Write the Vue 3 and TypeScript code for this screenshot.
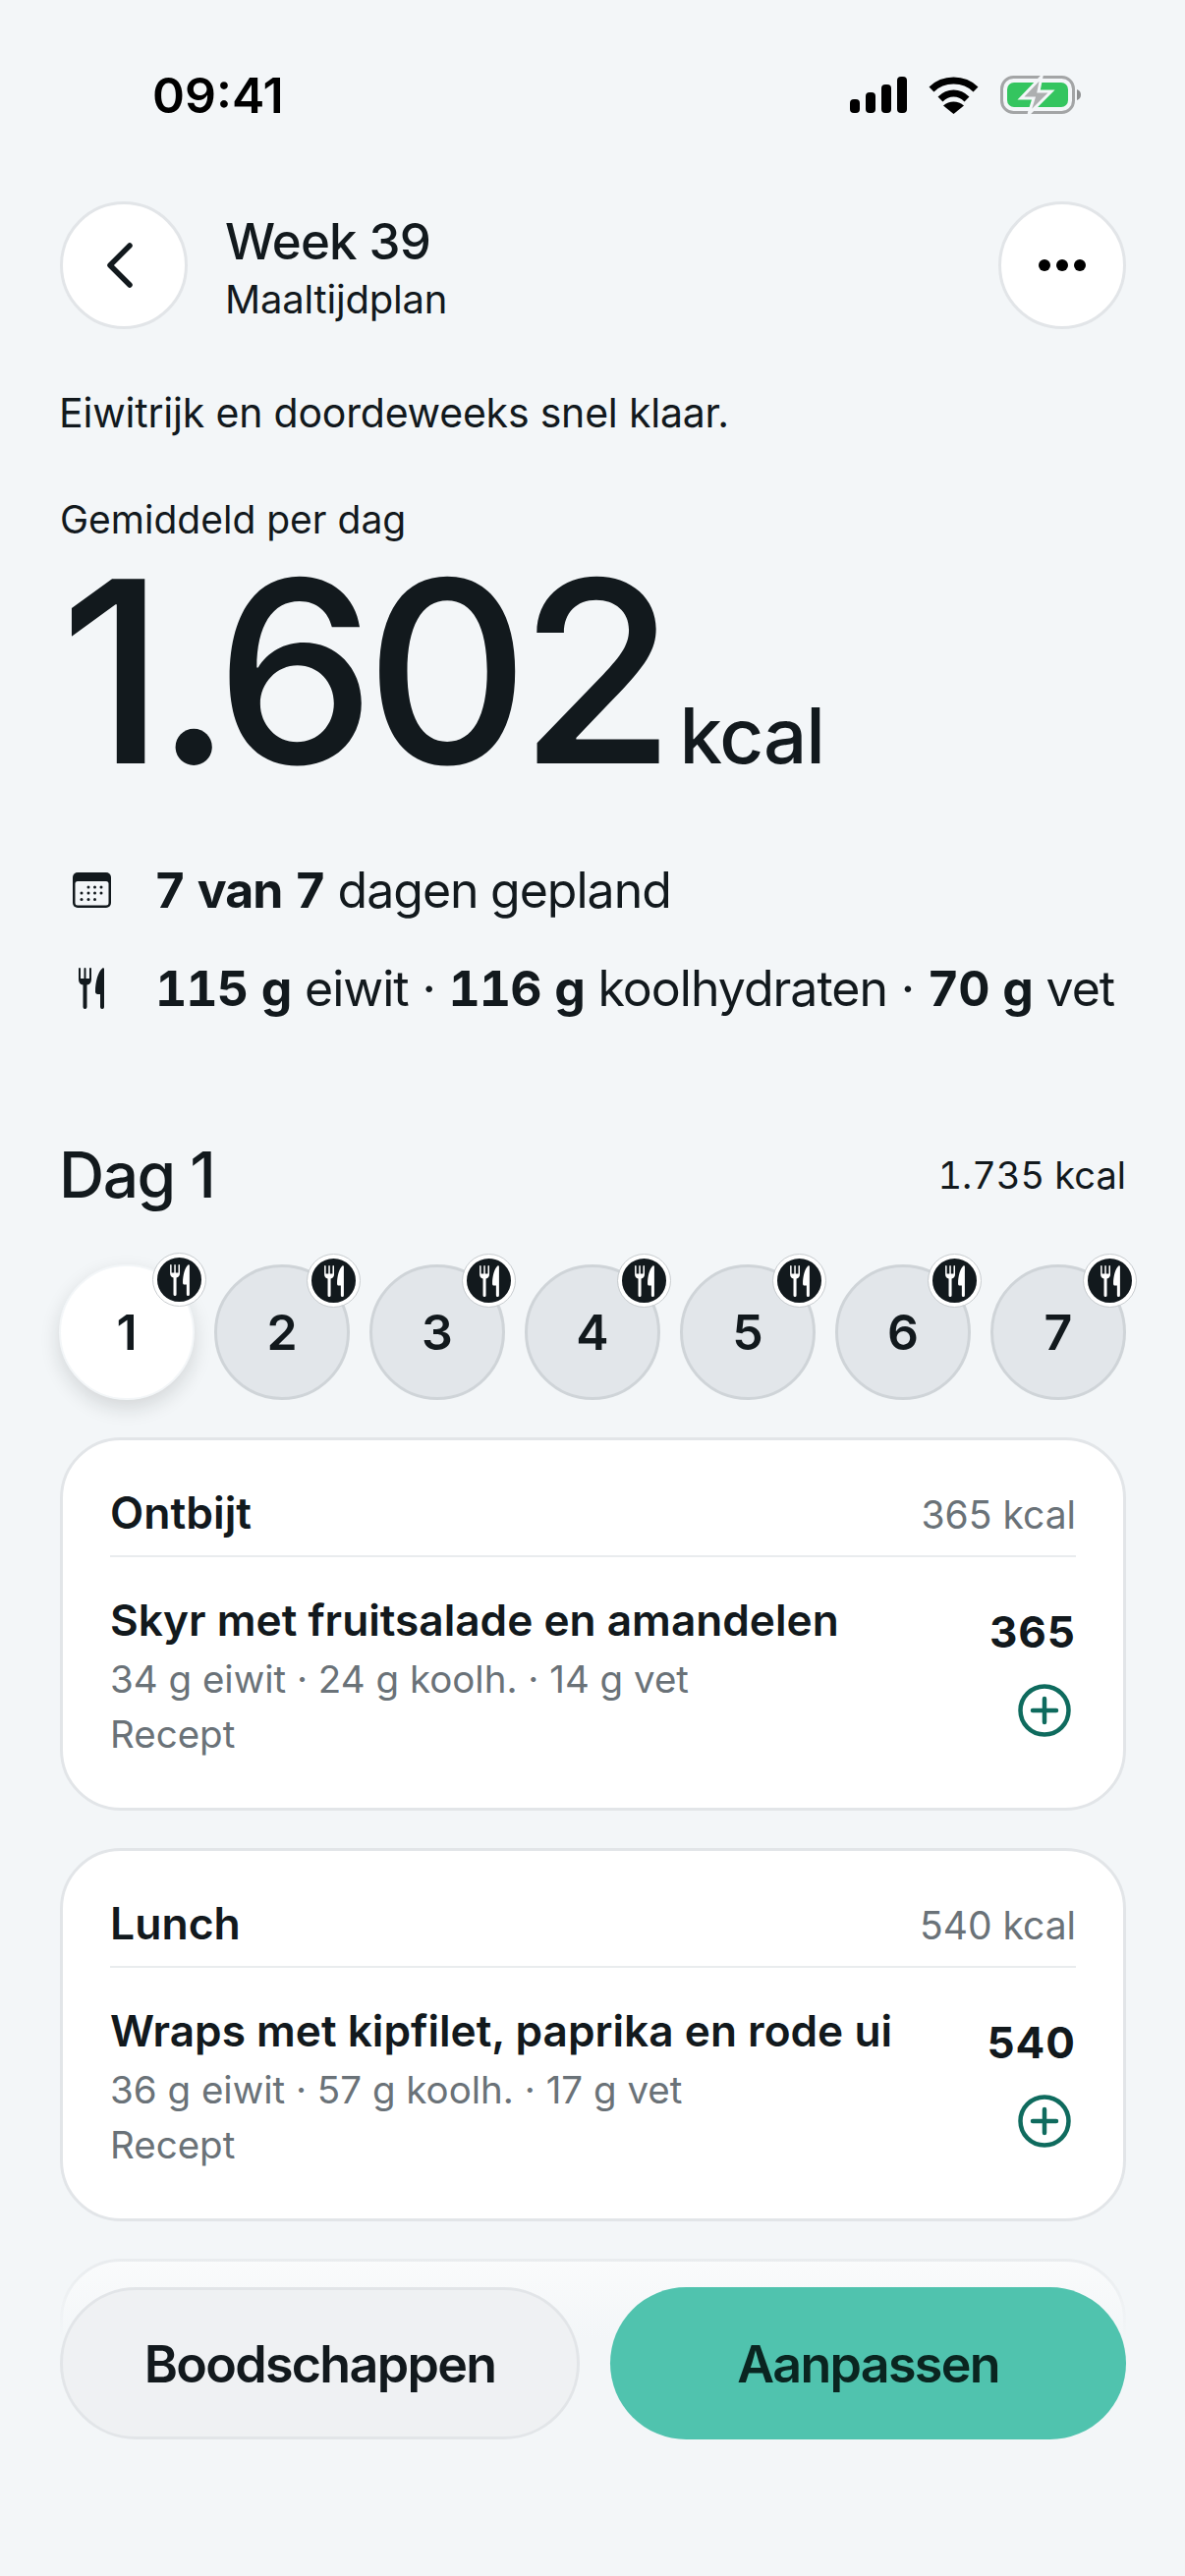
<template>
  <div class="screen">
    <div class="status">
      <span class="time">09:41</span>
      <div class="status-icons">
        <svg width="58" height="38" viewBox="0 0 58 38">
          <rect x="0" y="23" width="10" height="14" rx="4" />
          <rect x="16" y="16" width="10" height="21" rx="4" />
          <rect x="32" y="8" width="10" height="29" rx="4" />
          <rect x="48" y="0" width="10" height="37" rx="4" />
        </svg>
        <svg width="51" height="38" viewBox="0 0 51 38">
          <path d="M3 13C15 1 36 1 48 13" fill="none" stroke="#000" stroke-width="7" />
          <path d="M12 23C20 15 31 15 39 23" fill="none" stroke="#000" stroke-width="7" />
          <path d="M15 29.500C21 24 30 24 36 29.500L25.500 38z" />
        </svg>
        <svg width="84" height="40" viewBox="0 0 84 40">
          <rect x="1.500" y="1.500" width="73" height="36" rx="12" fill="none" stroke="#a3a5a6" stroke-width="3" />
          <rect x="7" y="7" width="62" height="25" rx="7" fill="#34c55f" />
          <path d="M78 14c3 1 4 3 4 5.500s-1 4.500-4 5.500z" fill="#8e9091" />
          <path d="M42 1 21 23h13l-5 16 23-23H39z" fill="#adafb0" stroke="#f3f6f8" stroke-width="3" />
        </svg>
      </div>
    </div>

    <div class="header">
      <button class="round-btn">
        <svg class="chevron" width="30" height="48" viewBox="0 0 30 48">
          <path d="M25 4 5 24l20 20" fill="none" stroke="#12191d" stroke-width="5.500" stroke-linecap="round" stroke-linejoin="round" />
        </svg>
      </button>
      <div class="header-text">
        <div class="week">Week 39</div>
        <div class="sub">Maaltijdplan</div>
      </div>
      <button class="round-btn">
        <svg width="50" height="14" viewBox="0 0 50 14">
          <circle cx="7" cy="7" r="6" />
          <circle cx="25" cy="7" r="6" />
          <circle cx="43" cy="7" r="6" />
        </svg>
      </button>
    </div>

    <p class="intro">Eiwitrijk en doordeweeks snel klaar.</p>
    <div class="avg-label">Gemiddeld per dag</div>
    <div class="total">
      <span class="total-num">1.602</span>
      <span class="total-unit">kcal</span>
    </div>

    <div class="stat-row">
      <svg class="stat-icon" width="39" height="36" viewBox="0 0 39 36">
        <rect width="39" height="36" rx="5" fill="#12191d" />
        <rect x="2.500" y="9" width="34" height="24.500" rx="2.500" fill="#f3f6f8" />
        <g fill="#12191d">
          <circle v-for="d in calendarDots" :key="d[0] + '-' + d[1]" :cx="d[0]" :cy="d[1]" r="1.500" />
        </g>
      </svg>
      <span><b>7 van 7</b> dagen gepland</span>
    </div>
    <div class="stat-row stat-row-2">
      <svg class="stat-icon" width="26" height="42" viewBox="0 0 26 42">
        <path :d="forkKnife" fill="#12191d" />
      </svg>
      <span><b>115 g</b> eiwit · <b>116 g</b> koolhydraten · <b>70 g</b> vet</span>
    </div>

    <div class="day-head">
      <span class="day-title">Dag 1</span>
      <span class="day-kcal">1.735 kcal</span>
    </div>

    <div class="days">
      <div v-for="n in 7" :key="n" class="day" :class="{ active: n === 1 }">
        {{ n }}
        <span class="badge">
          <svg width="20" height="32" viewBox="0 0 26 42">
            <path :d="forkKnife" fill="#fff" />
          </svg>
        </span>
      </div>
    </div>

    <div v-for="meal in meals" :key="meal.type" class="card">
      <div class="card-head">
        <span class="meal-type">{{ meal.type }}</span>
        <span class="meal-kcal">{{ meal.kcal }} kcal</span>
      </div>
      <div class="card-body">
        <div class="meal-info">
          <div class="meal-name">{{ meal.name }}</div>
          <div class="meal-meta">{{ meal.macros }}</div>
          <div class="meal-meta meal-source">Recept</div>
        </div>
        <div class="meal-side">
          <span class="meal-num">{{ meal.kcal }}</span>
          <svg class="plus" width="54" height="54" viewBox="0 0 54 54">
            <circle cx="27" cy="27" r="24.500" fill="none" stroke="#0f6b5e" stroke-width="4.500" />
            <path d="M27 15v24M15 27h24" fill="none" stroke="#0f6b5e" stroke-width="4.500" stroke-linecap="round" />
          </svg>
        </div>
      </div>
    </div>
    <div class="card card-peek"></div>

    <div class="bottom">
      <button class="action action-light">Boodschappen</button>
      <button class="action action-main">Aanpassen</button>
    </div>
  </div>
</template>

<script setup lang="ts">
interface Meal {
  type: string
  kcal: number
  name: string
  macros: string
}

const meals: Meal[] = [
  { type: 'Ontbijt', kcal: 365, name: 'Skyr met fruitsalade en amandelen', macros: '34 g eiwit · 24 g koolh. · 14 g vet' },
  { type: 'Lunch', kcal: 540, name: 'Wraps met kipfilet, paprika en rode ui', macros: '36 g eiwit · 57 g koolh. · 17 g vet' },
]

const calendarDots: number[][] = [
  [16, 15], [22.500, 15], [29, 15],
  [9, 21], [16, 21], [22.500, 21], [29, 21],
  [9, 27.500], [16, 27.500], [22.500, 27.500],
]

const forkKnife =
  'M0 1a1 1 0 0 1 2 0v10h3.500V1a1 1 0 0 1 2 0v10H11V1a1 1 0 0 1 2 0v11c0 3-1.600 5-4.500 5.600V40a2 2 0 0 1-4 0V17.600C1.600 17 0 15 0 12z' +
  'M26 1.500V40a2 2 0 0 1-4 0V27h-2.500c-1.500 0-2.500-1-2.500-2.500C17 14 20 4 24 .8 25 0 26 .3 26 1.500z'
</script>

<style>
html,
body {
  margin: 0;
  background: #f3f6f8;
}
</style>

<style scoped>
.screen {
  position: relative;
  box-sizing: border-box;
  width: 1206px;
  height: 2622px;
  overflow: hidden;
  padding: 0 60px 0 61px;
  background: #f3f6f8;
  color: #12191d;
  font-family: Inter, "Liberation Sans", sans-serif;
}
.status {
  display: flex;
  justify-content: space-between;
  align-items: center;
  height: 38px;
  padding: 78px 44px 89px 94px;
}
.time {
  font-size: 50px;
  font-weight: 600;
  color: #000;
  line-height: 38px;
}
.status-icons {
  display: flex;
  align-items: center;
  gap: 22px;
}
.header {
  display: flex;
  align-items: center;
}
.round-btn {
  box-sizing: border-box;
  display: flex;
  align-items: center;
  justify-content: center;
  width: 130px;
  height: 130px;
  padding: 0;
  border: 3px solid #e2e5e8;
  border-radius: 50%;
  background: #fff;
}
.chevron {
  margin-right: 8px;
}
.header-text {
  flex: 1;
  margin-left: 38px;
  padding-top: 5px;
}
.week {
  font-size: 51px;
  font-weight: 500;
  line-height: 62px;
  letter-spacing: -0.800px;
}
.sub {
  margin-top: 3px;
  font-size: 40px;
  font-weight: 400;
  line-height: 50px;
  letter-spacing: -0.200px;
}
.intro {
  margin: 60px 0 0 -1px;
  font-size: 41px;
  line-height: 50px;
  letter-spacing: -0.200px;
}
.avg-label {
  margin-top: 59px;
  font-size: 39px;
  line-height: 50px;
}
.total {
  display: flex;
  align-items: baseline;
  gap: 14px;
  height: 240px;
  margin-top: 9px;
  line-height: 240px;
}
.total-num {
  font-size: 258px;
  font-weight: 500;
  letter-spacing: -10px;
}
.total-unit {
  font-size: 78px;
  font-weight: 500;
  letter-spacing: -1px;
}
.stat-row {
  display: flex;
  align-items: center;
  margin-top: 71px;
  font-size: 50px;
  line-height: 64px;
  letter-spacing: -1px;
  font-variant-numeric: tabular-nums;
}
.stat-row-2 {
  margin-top: 36px;
  word-spacing: 1.300px;
}
.stat-row b {
  font-weight: 700;
  letter-spacing: -1px;
}
.stat-icon {
  flex: none;
  margin: 0 44px 0 13px;
}
.stat-row-2 .stat-icon {
  margin: 0 52px 0 19px;
}
.day-head {
  display: flex;
  justify-content: space-between;
  align-items: center;
  margin: 118px 0 0 -1px;
  line-height: 80px;
}
.day-title {
  font-size: 64px;
  font-weight: 500;
  letter-spacing: -1.500px;
}
.day-kcal {
  font-size: 38px;
  font-variant-numeric: tabular-nums;
}
.days {
  display: flex;
  justify-content: space-between;
  margin: 51px 0 0 -1px;
}
.day {
  position: relative;
  box-sizing: border-box;
  display: flex;
  align-items: center;
  justify-content: center;
  width: 138px;
  height: 138px;
  border: 3px solid #cfd4d8;
  border-radius: 50%;
  background: #e2e6ea;
  font-size: 50px;
  font-weight: 600;
}
.day.active {
  border: 2px solid #f3f6f8;
  background: #fff;
  box-shadow: 0 8px 20px rgba(20, 25, 30, 0.14);
}
.badge {
  position: absolute;
  top: -13px;
  right: -13px;
  display: flex;
  align-items: center;
  justify-content: center;
  width: 45px;
  height: 45px;
  border: 4px solid #fff;
  border-radius: 50%;
  outline: 1px solid #c9cdd0;
  background: #12191d;
}
.card {
  box-sizing: border-box;
  height: 380px;
  margin-top: 38px;
  padding: 46px 48px 0;
  border: 3px solid #e2e5e8;
  border-radius: 62px;
  background: #fff;
}
.card-head {
  display: flex;
  justify-content: space-between;
  align-items: baseline;
  padding-bottom: 13px;
  border-bottom: 2px solid #e9ecee;
  line-height: 56px;
}
.meal-type {
  font-size: 44.500px;
  font-weight: 580;
}
.meal-kcal {
  font-size: 39px;
  color: #6a7278;
}
.card-body {
  display: flex;
  justify-content: space-between;
  margin-top: 36px;
}
.meal-name {
  font-size: 44.200px;
  font-weight: 580;
  line-height: 56px;
}
.meal-meta {
  margin-top: 5px;
  font-size: 38.500px;
  line-height: 54px;
  color: #6a7278;
}
.meal-source {
  margin-top: 2px;
}
.meal-side {
  display: flex;
  flex-direction: column;
  align-items: flex-end;
}
.meal-num {
  margin-top: 12px;
  font-size: 44px;
  font-weight: 700;
  line-height: 56px;
  letter-spacing: 1px;
}
.plus {
  margin: 25px 5px 0 0;
}
.bottom {
  position: absolute;
  left: 0;
  right: 0;
  top: 2290px;
  bottom: 0;
  display: flex;
  align-items: flex-start;
  gap: 31px;
  box-sizing: border-box;
  padding: 38px 60px 0 61px;
  background: linear-gradient(rgba(243, 246, 248, 0.35), #f3f6f8 90px);
}
.action {
  box-sizing: border-box;
  height: 155px;
  padding: 2px 0 0;
  border-radius: 78px;
  font-family: inherit;
  font-size: 52px;
  font-weight: 600;
  letter-spacing: -1.700px;
  color: #12191d;
}
.action-light {
  width: 529px;
  border: 3px solid #e2e5e8;
  background: #eff1f3;
}
.action-main {
  width: 525px;
  border: 0;
  background: #50c3ae;
  color: #0a2520;
}
</style>
